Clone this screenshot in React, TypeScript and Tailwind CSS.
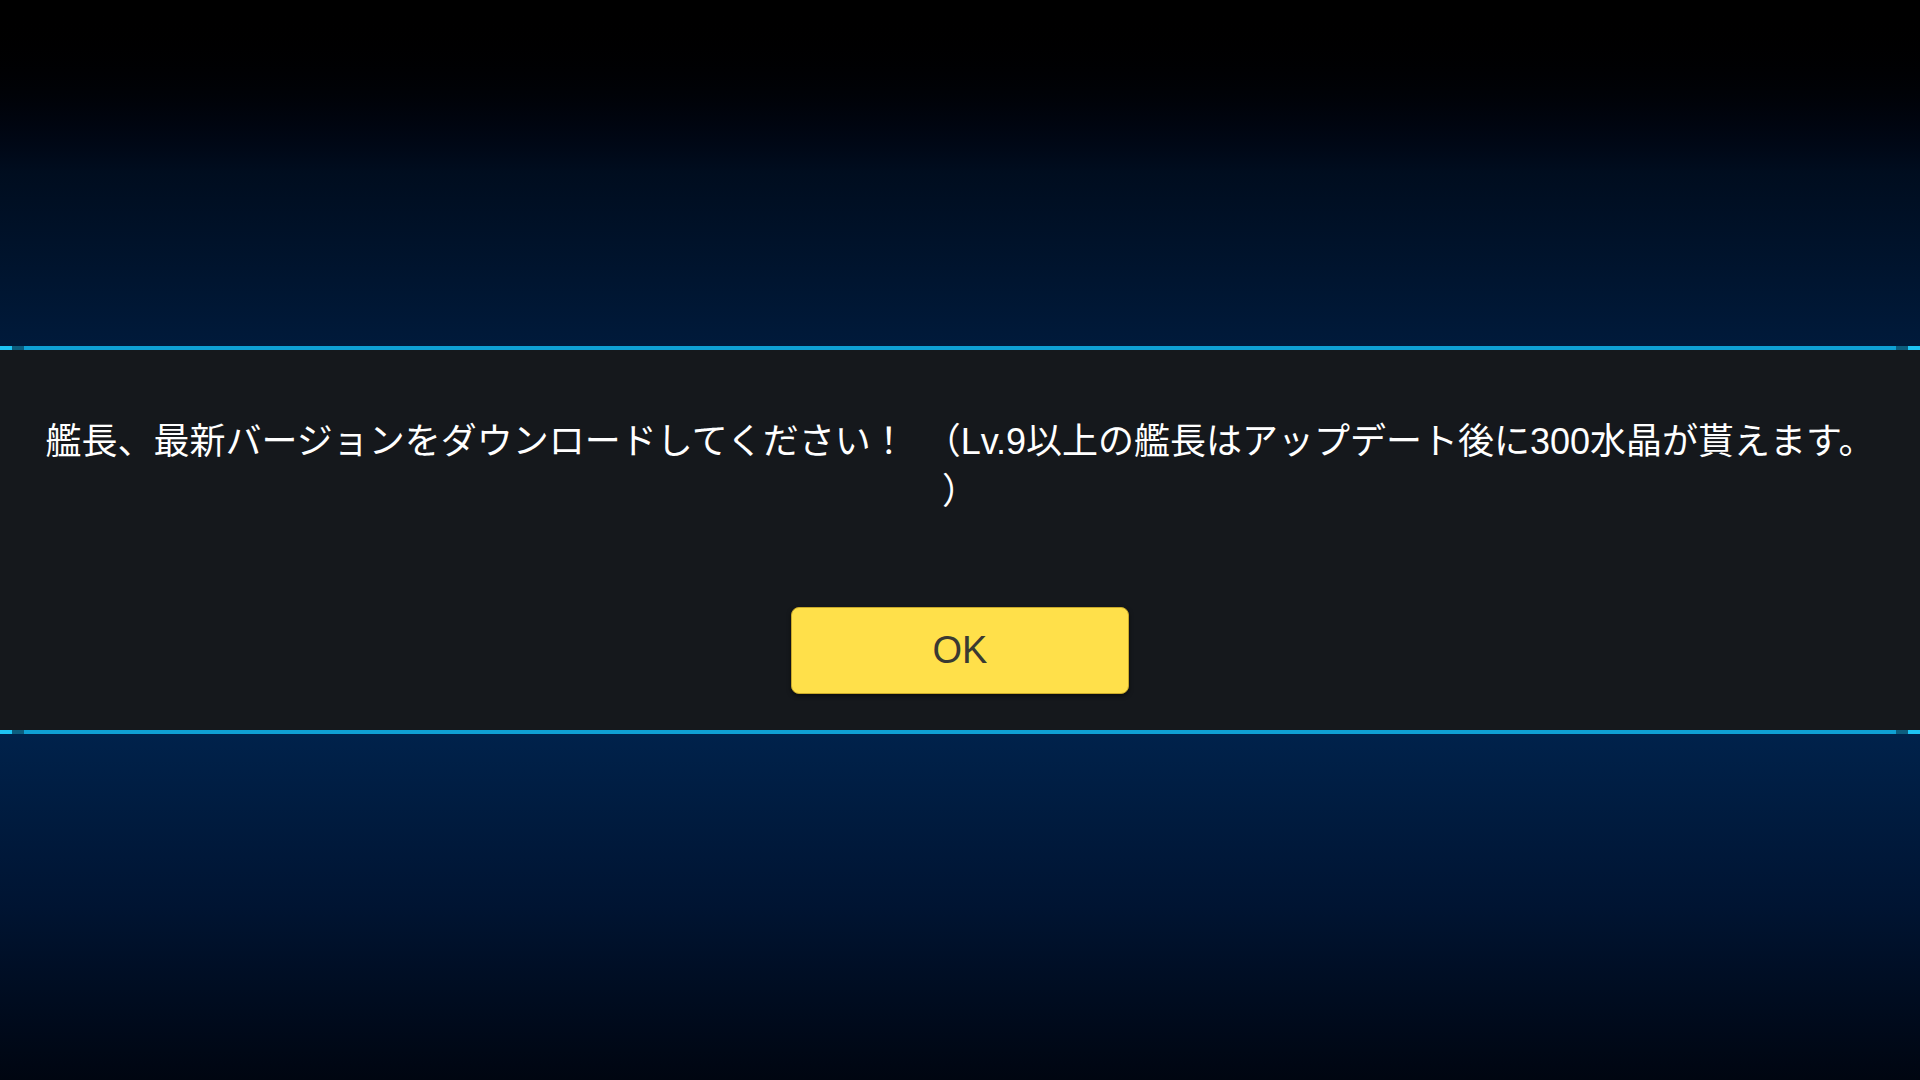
import React from "react";

function EdgeLine() {
  return (
    <div className="flex h-[4px] w-full">
      <div className="w-[12px] bg-[#1ec4f4]" />
      <div className="w-[12px] bg-[#0c5d7e]" />
      <div className="flex-1 bg-[#0fa0d3]" />
      <div className="w-[12px] bg-[#0c5d7e]" />
      <div className="w-[12px] bg-[#1ec4f4]" />
    </div>
  );
}

export default function App() {
  return (
    <div className="flex h-[1080px] w-[1920px] flex-col overflow-hidden bg-black font-['Liberation_Sans','Noto_Sans_CJK_JP',sans-serif]">
      <div className="h-[346px] bg-gradient-to-b from-[#000000] via-[#000d1f] to-[#001a3b]" />
      <EdgeLine />
      <div className="flex h-[380px] flex-col items-center bg-[#15181c] px-[20px] pt-[67px]">
        <p className="text-center text-[36px] leading-[50px] text-white">
          艦長、最新バージョンをダウンロードしてください！　（Lv.9以上の艦長はアップデート後に300水晶が貰えます。
          <br />）
        </p>
        <button className="mt-[90px] h-[87px] w-[338px] rounded-[8px] border border-[#c9a92a] bg-[#ffe04a] text-[38px] text-[#3a3a32] shadow-[0_2px_4px_rgba(0,0,0,0.5)]">
          OK
        </button>
      </div>
      <EdgeLine />
      <div className="flex-1 bg-gradient-to-b from-[#00224b] via-[#001432] to-[#000611]" />
    </div>
  );
}
